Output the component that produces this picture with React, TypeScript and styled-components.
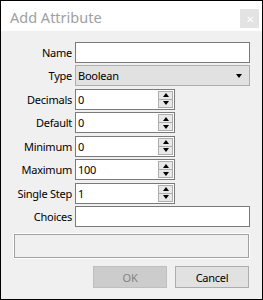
import * as React from 'react'
import styled, { createGlobalStyle, css } from 'styled-components'

const GlobalStyle = createGlobalStyle`
  html, body {
    margin: 0;
    padding: 0;
    background: #ffffff;
  }
  body {
    font-family: "Noto Sans", "Open Sans", sans-serif;
    font-size: 11px;
    letter-spacing: -0.25px;
    color: #000000;
  }
`

const Window = styled.div`
  width: 263px;
  height: 300px;
  box-sizing: border-box;
  border: 1px solid #000000;
  display: flex;
  flex-direction: column;
  background: #f0f0f0;
`

const TitleBar = styled.div`
  height: 30px;
  background: #ffffff;
  display: flex;
  align-items: flex-start;
  justify-content: space-between;
  padding: 0 3px 0 9px;
  flex: none;
`

const Title = styled.span`
  font-size: 14.5px;
  letter-spacing: 0;
  color: #a0a0a0;
  margin-top: 6px;
`

const CloseButton = styled.div`
  width: 19px;
  height: 19px;
  background: #e3e3e3;
  color: #ffffff;
  display: flex;
  align-items: center;
  justify-content: center;
  font-size: 10px;
  margin-top: 8px;
`

const Body = styled.div`
  flex: 1;
  display: flex;
  flex-direction: column;
  padding: 11px 12px 0 12px;
`

const Form = styled.div`
  display: grid;
  grid-template-columns: 59px 1fr;
  column-gap: 3px;
  row-gap: 2.45px;
  align-items: center;
`

const Label = styled.label`
  text-align: right;
  white-space: nowrap;
`

const LineEdit = styled.div`
  height: 21px;
  box-sizing: border-box;
  border: 1px solid #7a7a7a;
  background: #ffffff;
  width: 175px;
`

const Combo = styled.div`
  height: 21px;
  box-sizing: border-box;
  border: 1px solid #adadad;
  background: #e1e1e1;
  width: 175px;
  display: flex;
  align-items: center;
  justify-content: space-between;
  padding: 0 7px 0 2px;
`

const SpinBox = styled.div`
  height: 21px;
  width: 100px;
  box-sizing: border-box;
  border: 1px solid #7a7a7a;
  background: #ffffff;
  display: flex;
  align-items: stretch;
`

const SpinValue = styled.span`
  flex: 1;
  padding-left: 2px;
  display: flex;
  align-items: center;
`

const SpinButtons = styled.div`
  width: 15px;
  display: flex;
  flex-direction: column;
  padding: 1px 1px 1px 0;
`

const SpinButton = styled.div`
  flex: 1;
  box-sizing: border-box;
  border: 1px solid #adadad;
  background: #e8e8e8;
  display: flex;
  align-items: center;
  justify-content: center;
  ${({ $down }: { $down?: boolean }) => $down && css`
    border-top: none;
  `}
`

const Arrow = styled.div`
  width: 0;
  height: 0;
  border-left: 3.5px solid transparent;
  border-right: 3.5px solid transparent;
  ${({ $up }: { $up?: boolean }) => $up ? css`
    border-bottom: 4px solid #000000;
  ` : css`
    border-top: 4px solid #000000;
  `}
`

const StatusFrame = styled.div`
  margin: 7px 1px 0 1px;
  height: 24px;
  box-sizing: border-box;
  border: 1px solid #a0a0a0;
  outline: 1px solid #ffffff;
`

const Buttons = styled.div`
  display: flex;
  justify-content: flex-end;
  gap: 8px;
  margin-top: 8px;
  padding-right: 1px;
`

const Button = styled.div`
  width: 74px;
  height: 22px;
  box-sizing: border-box;
  display: flex;
  align-items: center;
  justify-content: center;
  ${({ $disabled }: { $disabled?: boolean }) => $disabled ? css`
    background: #cccccc;
    border: 1px solid #bfbfbf;
    color: #838383;
  ` : css`
    background: #e1e1e1;
    border: 1px solid #adadad;
    color: #000000;
  `}
`

const Spin = ({ value }: { value: string }) => (
  <SpinBox>
    <SpinValue>{value}</SpinValue>
    <SpinButtons>
      <SpinButton><Arrow $up /></SpinButton>
      <SpinButton $down><Arrow /></SpinButton>
    </SpinButtons>
  </SpinBox>
)

const spins = [
  ['Decimals', '0'],
  ['Default', '0'],
  ['Minimum', '0'],
  ['Maximum', '100'],
  ['Single Step', '1'],
]

export default function App() {
  return (
    <>
      <GlobalStyle />
      <Window>
        <TitleBar>
          <Title>Add Attribute</Title>
          <CloseButton>✕</CloseButton>
        </TitleBar>
        <Body>
          <Form>
            <Label>Name</Label>
            <LineEdit />
            <Label>Type</Label>
            <Combo>
              <span>Boolean</span>
              <Arrow />
            </Combo>
            {spins.map(([label, value]) => (
              <React.Fragment key={label}>
                <Label>{label}</Label>
                <Spin value={value} />
              </React.Fragment>
            ))}
            <Label>Choices</Label>
            <LineEdit />
          </Form>
          <StatusFrame />
          <Buttons>
            <Button $disabled>OK</Button>
            <Button>Cancel</Button>
          </Buttons>
        </Body>
      </Window>
    </>
  )
}
